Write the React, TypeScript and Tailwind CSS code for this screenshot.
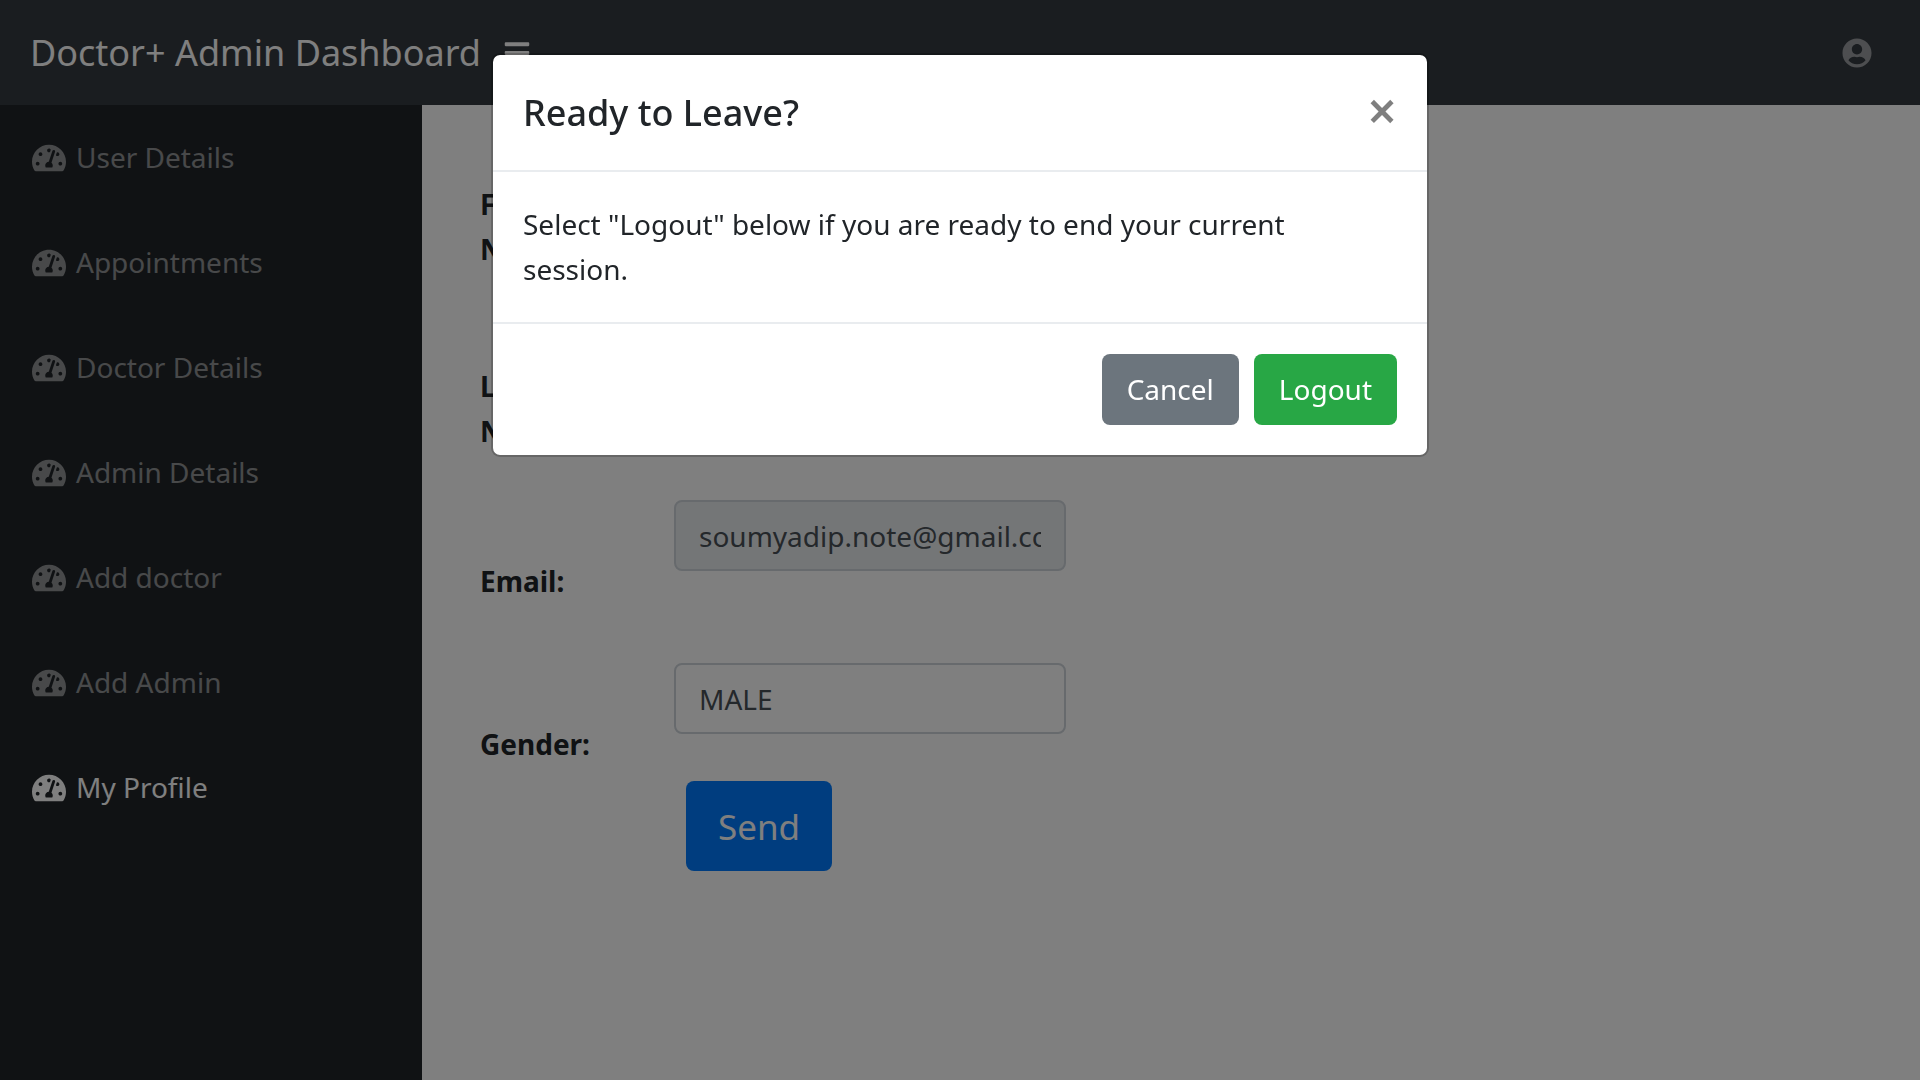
import { useState } from "react";
import { FaBars, FaTachometerAlt, FaUserCircle } from "react-icons/fa";

const navItems = [
  "User Details",
  "Appointments",
  "Doctor Details",
  "Admin Details",
  "Add doctor",
  "Add Admin",
  "My Profile",
];

const activeItem = "My Profile";

function TopBar() {
  return (
    <header className="flex h-[105px] items-center bg-[#343a40] px-[30px]">
      <a href="#home" className="text-[36px] leading-[56px] whitespace-nowrap text-white">
        Doctor+ Admin Dashboard
      </a>
      <button type="button" aria-label="Toggle sidebar" className="ml-[22px] text-white">
        <FaBars className="size-[28px]" />
      </button>
      <button type="button" aria-label="Account" className="mr-[18px] ml-auto text-white/50">
        <FaUserCircle className="size-[30px]" />
      </button>
    </header>
  );
}

function Sidebar() {
  return (
    <nav className="w-[422px] shrink-0 bg-[#212529]">
      <ul>
        {navItems.map((item) => (
          <li key={item}>
            <a
              href={"#" + item.toLowerCase().replace(" ", "-")}
              aria-current={item === activeItem ? "page" : undefined}
              className={
                item === activeItem
                  ? "flex h-[105px] items-center gap-[10px] px-8 text-white"
                  : "flex h-[105px] items-center gap-[10px] px-8 text-white/50"
              }
            >
              <FaTachometerAlt className="size-[34px]" />
              {item}
            </a>
          </li>
        ))}
      </ul>
    </nav>
  );
}

type FieldProps = {
  id: string;
  label: string;
  value: string;
  disabled?: boolean;
};

function Field({ id, label, value, disabled }: FieldProps) {
  const [text, setText] = useState(value);
  return (
    <div className="flex">
      <div className="w-[194px] shrink-0 pr-16">
        <label htmlFor={id} className="block font-bold text-[#212529]">
          {label}
        </label>
      </div>
      <input
        id={id}
        type="text"
        value={text}
        disabled={disabled}
        onChange={(e) => setText(e.target.value)}
        className="-mt-[59px] h-[71px] w-full max-w-[392px] rounded-lg border-2 border-[#ced4da] bg-white px-[23px] text-[#495057] disabled:bg-[#e9ecef]"
      />
    </div>
  );
}

function ProfileForm() {
  return (
    <main className="min-w-0 flex-1 bg-white px-[58px] pt-[77px]">
      <form onSubmit={(e) => e.preventDefault()}>
        <div className="flex flex-col">
          <div className="pb-[92px]">
            <Field id="first-name" label="First Name:" value="" />
          </div>
          <div className="pb-[105px]">
            <Field id="last-name" label="Last Name:" value="" />
          </div>
          <div className="pb-[118px]">
            <Field id="email" label="Email:" value="soumyadip.note@gmail.com" disabled />
          </div>
          <Field id="gender" label="Gender:" value="MALE" />
        </div>
        <button
          type="submit"
          className="mt-[14px] ml-[206px] h-[90px] rounded-lg bg-[#007bff] px-8 text-[35px] text-white"
        >
          Send
        </button>
      </form>
    </main>
  );
}

function LogoutDialog() {
  return (
    <div className="fixed inset-0 bg-black/50">
      <div
        role="dialog"
        aria-modal="true"
        aria-labelledby="logout-title"
        className="mx-auto mt-[53px] max-w-[938px] rounded-[9px] border-2 border-black/20 bg-white bg-clip-padding text-[#212529]"
      >
        <div className="flex items-start justify-between border-b-2 border-[#e9ecef] p-[30px]">
          <h5 id="logout-title" className="text-[36px] leading-[55px] font-medium">
            Ready to Leave?
          </h5>
          <button type="button" aria-label="Close" className="text-[52px] leading-[49px] font-semibold text-black/50">
            ×
          </button>
        </div>
        <div className="py-[30px] pr-16 pl-[30px]">
          Select "Logout" below if you are ready to end your current session.
        </div>
        <div className="flex justify-end gap-[15px] border-t-2 border-[#e9ecef] p-[30px]">
          <button type="button" className="h-[71px] rounded-lg bg-[#6c757d] px-[25px] text-white">
            Cancel
          </button>
          <a href="#logout" className="flex h-[71px] items-center rounded-lg bg-[#28a745] px-[25px] text-white">
            Logout
          </a>
        </div>
      </div>
    </div>
  );
}

export default function App() {
  return (
    <div className="flex min-h-screen flex-col font-['Noto_Sans','Open_Sans',sans-serif] text-[28px] leading-[45px]">
      <TopBar />
      <div className="flex flex-1">
        <Sidebar />
        <ProfileForm />
      </div>
      <LogoutDialog />
    </div>
  );
}
